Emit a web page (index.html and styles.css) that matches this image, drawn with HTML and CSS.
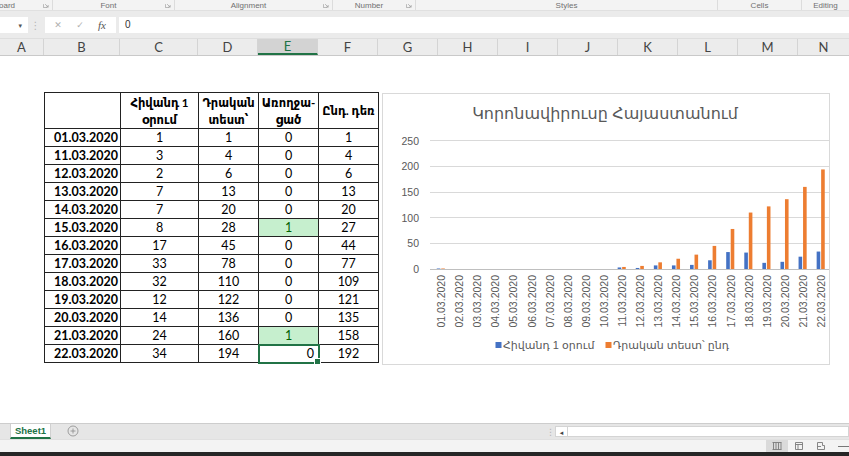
FILE: index.html
```html
<!DOCTYPE html>
<html lang="hy">
<head>
    <meta charset="UTF-8">
    <title>Book1 - Excel</title>
    <link rel="stylesheet" href="styles.css">
</head>
<body>

    <!-- Ribbon group captions -->
    <div class="ribbon-groups">
        <div class="group g-clip"><span class="group-name">Clipboard</span><svg class="launcher" viewBox="0 0 7 7"><path d="M0.5 2.5V6.5H4.5M2.5 2.5L6 6M6 3.5V6H3.5"/></svg></div>
        <div class="group g-font"><span class="group-name">Font</span><svg class="launcher" viewBox="0 0 7 7"><path d="M0.5 2.5V6.5H4.5M2.5 2.5L6 6M6 3.5V6H3.5"/></svg></div>
        <div class="group g-align"><span class="group-name">Alignment</span><svg class="launcher" viewBox="0 0 7 7"><path d="M0.5 2.5V6.5H4.5M2.5 2.5L6 6M6 3.5V6H3.5"/></svg></div>
        <div class="group g-number"><span class="group-name">Number</span><svg class="launcher" viewBox="0 0 7 7"><path d="M0.5 2.5V6.5H4.5M2.5 2.5L6 6M6 3.5V6H3.5"/></svg></div>
        <div class="group g-styles"><span class="group-name">Styles</span></div>
        <div class="group g-cells"><span class="group-name">Cells</span></div>
        <div class="group g-edit"><span class="group-name">Editing</span></div>
    </div>

    <!-- Formula bar -->
    <div class="formula-bar">
        <div class="name-box"><span class="caret">&#9662;</span></div>
        <span class="grip">&#8942;</span>
        <div class="fx-buttons">
            <span class="fx-btn">&#10005;</span>
            <span class="fx-btn">&#10003;</span>
            <span class="fx-btn fx">fx</span>
        </div>
        <div class="formula-input">0</div>
    </div>

    <!-- Column headers -->
    <div class="col-headers">
        <div class="col-head w-a">A</div>
        <div class="col-head w-b">B</div>
        <div class="col-head w-c">C</div>
        <div class="col-head w-std">D</div>
        <div class="col-head w-std active">E</div>
        <div class="col-head w-std">F</div>
        <div class="col-head w-std">G</div>
        <div class="col-head w-std">H</div>
        <div class="col-head w-std">I</div>
        <div class="col-head w-std">J</div>
        <div class="col-head w-std">K</div>
        <div class="col-head w-std">L</div>
        <div class="col-head w-std">M</div>
        <div class="col-head w-rest">N</div>
    </div>

    <!-- Worksheet -->
    <div class="sheet">
        <table class="data">
            <colgroup>
                <col class="c-date"><col class="c-wide"><col class="c-num"><col class="c-num"><col class="c-num">
            </colgroup>
            <tr class="head-row">
                <th></th>
                <th>Հիվանդ 1<br>օրում</th>
                <th>Դրական<br>տեստ՝</th>
                <th>Առողջա-<br>ցած</th>
                <th>Ընդ. դեռ</th>
            </tr>
            <tr><td class="date">01.03.2020</td><td>1</td><td>1</td><td>0</td><td>1</td></tr>
            <tr><td class="date">11.03.2020</td><td>3</td><td>4</td><td>0</td><td>4</td></tr>
            <tr><td class="date">12.03.2020</td><td>2</td><td>6</td><td>0</td><td>6</td></tr>
            <tr><td class="date">13.03.2020</td><td>7</td><td>13</td><td>0</td><td>13</td></tr>
            <tr><td class="date">14.03.2020</td><td>7</td><td>20</td><td>0</td><td>20</td></tr>
            <tr><td class="date">15.03.2020</td><td>8</td><td>28</td><td class="good">1</td><td>27</td></tr>
            <tr><td class="date">16.03.2020</td><td>17</td><td>45</td><td>0</td><td>44</td></tr>
            <tr><td class="date">17.03.2020</td><td>33</td><td>78</td><td>0</td><td>77</td></tr>
            <tr><td class="date">18.03.2020</td><td>32</td><td>110</td><td>0</td><td>109</td></tr>
            <tr><td class="date">19.03.2020</td><td>12</td><td>122</td><td>0</td><td>121</td></tr>
            <tr><td class="date">20.03.2020</td><td>14</td><td>136</td><td>0</td><td>135</td></tr>
            <tr><td class="date">21.03.2020</td><td>24</td><td>160</td><td class="good">1</td><td>158</td></tr>
            <tr><td class="date">22.03.2020</td><td>34</td><td>194</td><td class="selected">0</td><td>192</td></tr>
        </table>

        <!-- Chart -->
        <div class="chart">
            <svg width="446" height="270" viewBox="0 0 446 270">
                <text class="chart-title" x="222" y="25" text-anchor="middle">Կորոնավիրուսը Հայաստանում</text>

                <g class="grid">
                    <line x1="47" y1="46.5" x2="446" y2="46.5"/>
                    <line x1="47" y1="72.5" x2="446" y2="72.5"/>
                    <line x1="47" y1="98.5" x2="446" y2="98.5"/>
                    <line x1="47" y1="123.5" x2="446" y2="123.5"/>
                    <line x1="47" y1="149.5" x2="446" y2="149.5"/>
                    <line class="axis" x1="47" y1="175.5" x2="446" y2="175.5"/>
                </g>

                <g class="y-labels" text-anchor="end">
                    <text x="36" y="50.5">250</text>
                    <text x="36" y="76">200</text>
                    <text x="36" y="102">150</text>
                    <text x="36" y="127.5">100</text>
                    <text x="36" y="153">50</text>
                    <text x="36" y="179">0</text>
                </g>

                <!-- Հիվանդ 1 օրում -->
                <g class="bars-blue" transform="translate(1,0)">
                    <rect x="52.75" y="174.49" width="3.6" height="0.51"/>
                    <rect x="233.65" y="173.46" width="3.6" height="1.54"/>
                    <rect x="251.75" y="173.97" width="3.6" height="1.03"/>
                    <rect x="269.84" y="171.41" width="3.6" height="3.59"/>
                    <rect x="287.93" y="171.41" width="3.6" height="3.59"/>
                    <rect x="306.02" y="170.89" width="3.6" height="4.11"/>
                    <rect x="324.11" y="166.28" width="3.6" height="8.72"/>
                    <rect x="342.2" y="158.06" width="3.6" height="16.94"/>
                    <rect x="360.29" y="158.58" width="3.6" height="16.42"/>
                    <rect x="378.38" y="168.84" width="3.6" height="6.16"/>
                    <rect x="396.47" y="167.82" width="3.6" height="7.18"/>
                    <rect x="414.56" y="162.68" width="3.6" height="12.32"/>
                    <rect x="432.65" y="157.55" width="3.6" height="17.45"/>
                </g>

                <!-- Դրական տեստ՝ ընդ -->
                <g class="bars-orange" transform="translate(1,0)">
                    <rect x="57.25" y="174.49" width="3.6" height="0.51"/>
                    <rect x="238.15" y="172.95" width="3.6" height="2.05"/>
                    <rect x="256.25" y="171.92" width="3.6" height="3.08"/>
                    <rect x="274.34" y="168.33" width="3.6" height="6.67"/>
                    <rect x="292.43" y="164.74" width="3.6" height="10.26"/>
                    <rect x="310.52" y="160.63" width="3.6" height="14.37"/>
                    <rect x="328.61" y="151.91" width="3.6" height="23.09"/>
                    <rect x="346.7" y="134.97" width="3.6" height="40.03"/>
                    <rect x="364.79" y="118.55" width="3.6" height="56.45"/>
                    <rect x="382.88" y="112.39" width="3.6" height="62.61"/>
                    <rect x="400.97" y="105.2" width="3.6" height="69.8"/>
                    <rect x="419.06" y="92.89" width="3.6" height="82.11"/>
                    <rect x="437.15" y="75.44" width="3.6" height="99.56"/>
                </g>

                <g class="x-labels" text-anchor="end">
                    <text transform="translate(62.05,181) rotate(-90)">01.03.2020</text>
                    <text transform="translate(80.14,181) rotate(-90)">02.03.2020</text>
                    <text transform="translate(98.23,181) rotate(-90)">03.03.2020</text>
                    <text transform="translate(116.32,181) rotate(-90)">04.03.2020</text>
                    <text transform="translate(134.41,181) rotate(-90)">05.03.2020</text>
                    <text transform="translate(152.5,181) rotate(-90)">06.03.2020</text>
                    <text transform="translate(170.59,181) rotate(-90)">07.03.2020</text>
                    <text transform="translate(188.68,181) rotate(-90)">08.03.2020</text>
                    <text transform="translate(206.77,181) rotate(-90)">09.03.2020</text>
                    <text transform="translate(224.86,181) rotate(-90)">10.03.2020</text>
                    <text transform="translate(242.95,181) rotate(-90)">11.03.2020</text>
                    <text transform="translate(261.05,181) rotate(-90)">12.03.2020</text>
                    <text transform="translate(279.14,181) rotate(-90)">13.03.2020</text>
                    <text transform="translate(297.23,181) rotate(-90)">14.03.2020</text>
                    <text transform="translate(315.32,181) rotate(-90)">15.03.2020</text>
                    <text transform="translate(333.41,181) rotate(-90)">16.03.2020</text>
                    <text transform="translate(351.5,181) rotate(-90)">17.03.2020</text>
                    <text transform="translate(369.59,181) rotate(-90)">18.03.2020</text>
                    <text transform="translate(387.68,181) rotate(-90)">19.03.2020</text>
                    <text transform="translate(405.77,181) rotate(-90)">20.03.2020</text>
                    <text transform="translate(423.86,181) rotate(-90)">21.03.2020</text>
                    <text transform="translate(441.95,181) rotate(-90)">22.03.2020</text>
                </g>

                <g class="legend">
                    <rect class="sw-blue" x="112.5" y="248" width="6" height="6"/>
                    <text x="120" y="255">Հիվանդ 1 օրում</text>
                    <rect class="sw-orange" x="222.5" y="248" width="6" height="6"/>
                    <text x="230" y="255">Դրական տեստ՝ ընդ</text>
                </g>
            </svg>
        </div>
    </div>

    <!-- Sheet tabs + horizontal scroll -->
    <div class="tabs-bar">
        <div class="sheet-tab">Sheet1</div>
        <svg class="add-sheet" viewBox="0 0 12 12"><circle cx="6" cy="6" r="5"/><path d="M6 3.5V8.5M3.5 6H8.5"/></svg>
        <div class="hscroll">
            <span class="grip small">&#8942;</span>
            <span class="scroll-arrow">&#9666;</span>
            <div class="scroll-track"></div>
        </div>
    </div>

    <!-- Status bar -->
    <div class="status-bar">
        <div class="view-btn on">
            <svg viewBox="0 0 10 8"><path d="M1.5 0.5V7.5M4 0.5V7.5M6.5 0.5V7.5M9 0.5V7.5M0.5 0.5H9.5M0.5 7.5H9.5"/></svg>
        </div>
        <div class="view-btn">
            <svg viewBox="0 0 10 8"><path d="M1.5 0.5H8.5V7.5H1.5ZM1.5 2.5H8.5M4 2.5V7.5"/></svg>
        </div>
        <div class="view-btn">
            <svg viewBox="0 0 10 8"><path d="M1.5 0.5H6.5V3.5H8.5V7.5H1.5ZM1.5 4.5H5"/></svg>
        </div>
        <span class="zoom-line"></span>
    </div>

    <div class="taskbar"></div>

</body>
</html>
```

FILE: styles.css
```css
* {
    box-sizing: border-box;
}

body {
    margin: 0;
    width: 849px;
    height: 456px;
    overflow: hidden;
    background-color: #fff;
    font-family: Lato, "DejaVu Sans", sans-serif;
    color: #000;
}

/* Ribbon captions */
.ribbon-groups {
    display: flex;
    height: 11px;
    background-color: #f3f3f3;
    border-bottom: 1px solid #e0e0e0;
    font-family: "Liberation Sans", sans-serif;
    font-size: 8px;
    color: #707070;
}

.group {
    display: flex;
    align-items: center;
    overflow: hidden;
    white-space: nowrap;
    border-right: 1px solid #dcdcdc;
}

.group-name {
    flex: 1;
    text-align: center;
}

.launcher {
    flex: none;
    width: 6px;
    height: 6px;
    margin: 0 3px 0 1px;
    fill: none;
    stroke: #9a9a9a;
    stroke-width: 0.8;
}

.g-clip { width: 53px; justify-content: flex-end; }
.g-clip .group-name { flex: none; margin-right: 27px; }
.g-font { width: 122px; }
.g-align { width: 158px; }
.g-number { width: 83px; }
.g-styles { width: 302px; }
.g-cells { width: 84px; }
.g-edit { flex: 1; border-right: none; }

/* Formula bar */
.formula-bar {
    display: flex;
    align-items: center;
    height: 27px;
    background-color: #ebebeb;
    padding-top: 1px;
}

.name-box {
    width: 28px;
    height: 16px;
    background-color: #fff;
    display: flex;
    align-items: center;
    justify-content: flex-end;
    padding-right: 6px;
}

.caret {
    font-size: 7px;
    color: #555;
}

.grip {
    width: 15px;
    text-align: center;
    font-size: 10px;
    color: #b5b5b5;
}

.fx-buttons {
    display: flex;
    align-items: center;
    width: 71px;
    height: 16px;
    margin-left: 2px;
    background-color: #fff;
    padding-left: 2px;
}

.fx-btn {
    width: 22px;
    font-family: "DejaVu Sans", sans-serif;
    font-size: 9px;
    color: #b0b0b0;
    text-align: center;
}

.fx {
    font-family: "Liberation Serif", serif;
    font-style: italic;
    font-size: 11px;
    color: #555;
}

.formula-input {
    flex: 1;
    height: 16px;
    margin-left: 3px;
    background-color: #fff;
    padding-left: 6px;
    font-family: "Liberation Sans", sans-serif;
    font-size: 10px;
    line-height: 16px;
    color: #333;
}

/* Column headers */
.col-headers {
    display: flex;
    height: 18px;
    background-color: #ececec;
    border-top: 1px solid #dedede;
    border-bottom: 1px solid #c9c9c9;
}

.col-head {
    display: flex;
    align-items: center;
    justify-content: center;
    border-right: 1px solid #d4d4d4;
    font-size: 13px;
    color: #444;
}

.col-head.active {
    background-color: #d3d3d3;
    border-bottom: 2px solid #217346;
    color: #217346;
}

.w-a { width: 44px; }
.w-b { width: 76px; }
.w-c { width: 78px; }
.w-std { width: 60px; }
.w-rest { flex: 1; border-right: none; }

/* Worksheet */
.sheet {
    display: flex;
    align-items: flex-start;
    height: 367px;
    padding: 36px 0 0 44px;
    background-color: #fff;
}

.data {
    border-collapse: collapse;
    table-layout: fixed;
    width: 334px;
    font-size: 12.5px;
}

.c-date { width: 76px; }
.c-wide { width: 78px; }
.c-num { width: 60px; }

.data th,
.data td {
    border: 1px solid #222;
    padding: 0 2px;
    text-align: center;
    vertical-align: middle;
}

.data td {
    height: 18px;
    line-height: 16px;
}

.head-row th {
    height: 36px;
    line-height: 17px;
    font-weight: bold;
    font-size: 11.5px;
}

.data .date {
    font-weight: bold;
    text-align: right;
    padding-right: 2px;
}

.data .good {
    background-color: #c6efce;
    color: #006100;
}

.data .selected {
    position: relative;
    text-align: right;
    padding-right: 4px;
    outline: 2px solid #217346;
    outline-offset: -1px;
}

.data .selected::after {
    content: "";
    position: absolute;
    right: -3px;
    bottom: -3px;
    width: 5px;
    height: 5px;
    background-color: #217346;
    border: 1px solid #fff;
}

/* Chart */
.chart {
    width: 448px;
    height: 272px;
    margin: 1px 0 0 3px;
    border: 1px solid #d9d9d9;
    background-color: #fff;
}

.chart svg {
    display: block;
}

.chart text {
    font-family: "Liberation Sans", "DejaVu Sans", sans-serif;
    fill: #595959;
}

.chart-title {
    font-size: 16px;
}

.grid line {
    stroke: #d9d9d9;
    stroke-width: 1;
}

.grid .axis {
    stroke: #bfbfbf;
}

.y-labels text {
    font-size: 10.5px;
}

.x-labels text {
    font-size: 10.5px;
}

.bars-blue rect,
.sw-blue {
    fill: #4472c4;
}

.bars-orange rect,
.sw-orange {
    fill: #ed7d31;
}

.legend text {
    font-size: 11px;
}

/* Sheet tabs */
.tabs-bar {
    display: flex;
    align-items: stretch;
    height: 16px;
    background-color: #e6e6e6;
    border-top: 1px solid #cdcdcd;
}

.sheet-tab {
    width: 41px;
    margin-left: 10px;
    background-color: #fff;
    border-bottom: 2px solid #217346;
    border-left: 1px solid #d0d0d0;
    border-right: 1px solid #d0d0d0;
    display: flex;
    align-items: center;
    justify-content: center;
    font-family: "Liberation Sans", sans-serif;
    font-size: 9.5px;
    font-weight: bold;
    color: #217346;
}

.add-sheet {
    width: 12px;
    height: 12px;
    margin: 1px 0 0 16px;
    fill: none;
    stroke: #8a8a8a;
    stroke-width: 0.8;
}

.hscroll {
    display: flex;
    align-items: center;
    margin-left: auto;
    width: 303px;
}

.grip.small {
    width: 9px;
    font-size: 9px;
}

.scroll-arrow {
    width: 12px;
    height: 11px;
    font-size: 7px;
    line-height: 11px;
    text-align: center;
    color: #444;
    background-color: #fff;
    border: 1px solid #d4d4d4;
    border-right: none;
}

.scroll-track {
    flex: 1;
    height: 11px;
    background-color: #fff;
    border: 1px solid #d4d4d4;
}

/* Status bar */
.status-bar {
    display: flex;
    align-items: stretch;
    justify-content: flex-end;
    height: 13px;
    background-color: #f3f3f3;
    border-top: 1px solid #e0e0e0;
}

.view-btn {
    width: 22px;
    display: flex;
    align-items: center;
    justify-content: center;
}

.view-btn.on {
    background-color: #dadada;
}

.view-btn svg {
    width: 10px;
    height: 8px;
    fill: none;
    stroke: #7a7a7a;
    stroke-width: 0.9;
}

.zoom-line {
    width: 11px;
    margin: 6px 0 0 6px;
    height: 1px;
    background-color: #777;
}

.taskbar {
    height: 4px;
    background-color: #262626;
}
```
